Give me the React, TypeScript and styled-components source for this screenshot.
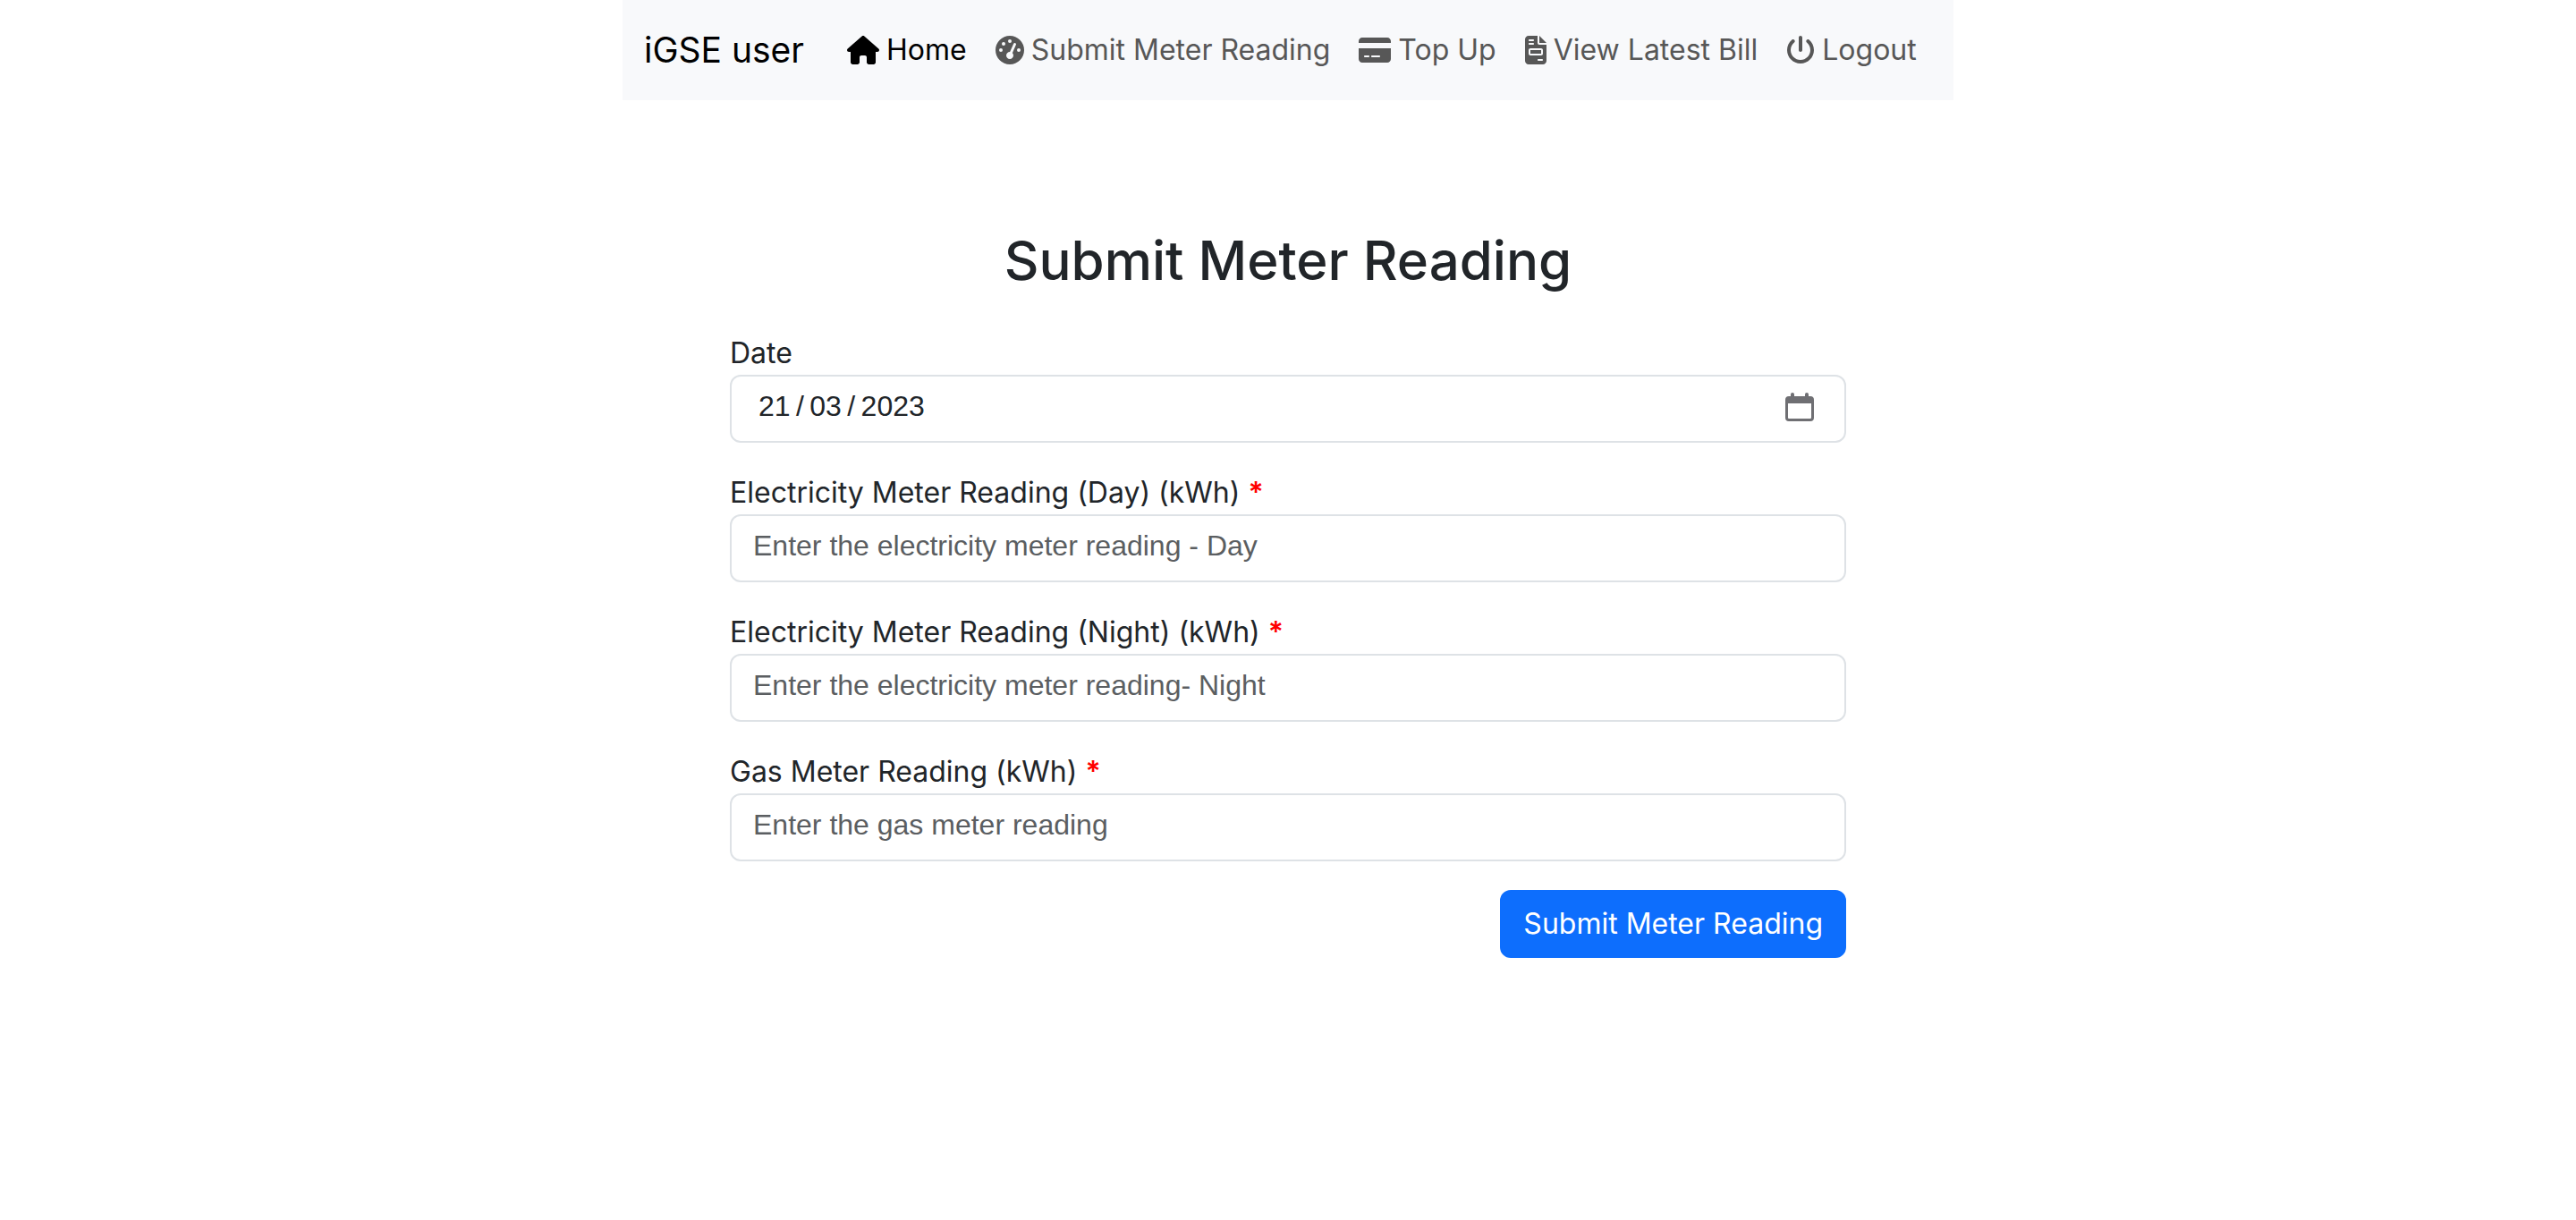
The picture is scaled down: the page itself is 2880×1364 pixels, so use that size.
import React, { useRef } from "react";
import styled, { createGlobalStyle } from "styled-components";
import { FaHouse, FaGaugeHigh, FaCreditCard, FaFileInvoice, FaPowerOff } from "react-icons/fa6";

const GlobalStyle = createGlobalStyle`
  *, *::before, *::after { box-sizing: border-box; }
  body {
    margin: 0;
    background: #fff;
    color: #212529;
    font-family: Inter, "Liberation Sans", sans-serif;
    font-size: 32px;
    line-height: 48px;
  }
`;

const Container = styled.div`
  width: 100%;
  max-width: 1488px;
  margin: 0 auto;
`;

const Navbar = styled.nav`
  display: flex;
  align-items: center;
  padding: 16px 24px;
  background: #f8f9fb;
`;

const Brand = styled.a`
  margin-right: 32px;
  padding: 10px 0;
  color: #000;
  font-size: 39px;
  line-height: 60px;
  text-decoration: none;
  white-space: nowrap;
`;

const NavList = styled.ul`
  display: flex;
  margin: 0;
  padding: 0;
  list-style: none;
`;

const NavLink = styled.a<{ $active?: boolean; $iconWidth: number }>`
  display: flex;
  align-items: center;
  gap: 8px;
  padding: 16px;
  color: ${({ $active }) => ($active ? "#000" : "#575757")};
  text-decoration: none;
  white-space: nowrap;

  svg {
    flex: none;
    width: ${({ $iconWidth }) => $iconWidth}px;
    height: 32px;
  }
`;

const Main = styled.main`
  padding: 139px 120px 0;
`;

const Title = styled.h1`
  margin: 0 0 40px;
  font-size: 60px;
  font-weight: 500;
  line-height: 80px;
  text-align: center;
`;

const Form = styled.form`
  display: flex;
  flex-direction: column;
  gap: 32px;
`;

const Field = styled.div`
  display: flex;
  flex-direction: column;
`;

const Label = styled.label``;

const Required = styled.span`
  color: #f00;
  font-weight: 600;
`;

const Control = styled.div`
  display: flex;
  align-items: center;
  border: 2px solid #dee2e6;
  border-radius: 12px;
  background: #fff;
`;

const Input = styled.input<{ $date?: boolean }>`
  flex: 1;
  min-width: 0;
  height: 72px;
  padding: 9px ${({ $date }) => ($date ? 30 : 24)}px 15px;
  border: 0;
  outline: 0;
  background: transparent;
  color: #212529;
  font-family: "Liberation Sans", Arial, sans-serif;
  font-size: 32px;
  line-height: 48px;

  &::placeholder {
    color: #5b5e61;
    opacity: 1;
  }
`;

const PickerButton = styled.button`
  display: flex;
  margin: 0 34px 4px 0;
  padding: 0;
  border: 0;
  background: none;
  color: #6f6f73;
  cursor: pointer;
`;

const SubmitButton = styled.button`
  align-self: flex-end;
  padding: 12px 24px;
  border: 2px solid #0d6efd;
  border-radius: 12px;
  background: #0d6efd;
  color: #fff;
  font: inherit;
  cursor: pointer;
`;

const CalendarIcon = () => (
  <svg width="32" height="32" viewBox="0 0 32 32" fill="currentColor" aria-hidden="true">
    <path
      fillRule="evenodd"
      d="M6 4V2a2 2 0 0 1 4 0v2h12V2a2 2 0 0 1 4 0v2h2a4 4 0 0 1 4 4v20a4 4 0 0 1-4 4H4a4 4 0 0 1-4-4V8a4 4 0 0 1 4-4zM3 12v16a1 1 0 0 0 1 1h24a1 1 0 0 0 1-1V12z"
    />
  </svg>
);

const links = [
  { label: "Home", Icon: FaHouse, iconWidth: 36, active: true },
  { label: "Submit Meter Reading", Icon: FaGaugeHigh, iconWidth: 32 },
  { label: "Top Up", Icon: FaCreditCard, iconWidth: 36 },
  { label: "View Latest Bill", Icon: FaFileInvoice, iconWidth: 24 },
  { label: "Logout", Icon: FaPowerOff, iconWidth: 32 },
];

const readings = [
  {
    id: "electricity-day",
    label: "Electricity Meter Reading (Day) (kWh)",
    placeholder: "Enter the electricity meter reading - Day",
  },
  {
    id: "electricity-night",
    label: "Electricity Meter Reading (Night) (kWh)",
    placeholder: "Enter the electricity meter reading- Night",
  },
  {
    id: "gas",
    label: "Gas Meter Reading (kWh)",
    placeholder: "Enter the gas meter reading",
  },
];

export default function App() {
  const dateRef = useRef<HTMLInputElement>(null);

  return (
    <>
      <GlobalStyle />
      <Container>
        <Navbar>
          <Brand href="#">iGSE user</Brand>
          <NavList>
            {links.map(({ label, Icon, iconWidth, active }) => (
              <li key={label}>
                <NavLink
                  href="#"
                  $active={active}
                  $iconWidth={iconWidth}
                  aria-current={active ? "page" : undefined}
                >
                  <Icon aria-hidden="true" />
                  {label}
                </NavLink>
              </li>
            ))}
          </NavList>
        </Navbar>
        <Main>
          <Title>Submit Meter Reading</Title>
          <Form onSubmit={(event) => event.preventDefault()}>
            <Field>
              <Label htmlFor="date">Date</Label>
              <Control>
                <Input
                  $date
                  ref={dateRef}
                  id="date"
                  type="text"
                  inputMode="numeric"
                  defaultValue={"21\u2009/\u200903\u2009/\u20092023"}
                />
                <PickerButton type="button" aria-label="Choose date" onClick={() => dateRef.current?.focus()}>
                  <CalendarIcon />
                </PickerButton>
              </Control>
            </Field>
            {readings.map(({ id, label, placeholder }) => (
              <Field key={id}>
                <Label htmlFor={id}>
                  {label} <Required>*</Required>
                </Label>
                <Control>
                  <Input id={id} type="text" inputMode="decimal" required placeholder={placeholder} />
                </Control>
              </Field>
            ))}
            <SubmitButton type="submit">Submit Meter Reading</SubmitButton>
          </Form>
        </Main>
      </Container>
    </>
  );
}
